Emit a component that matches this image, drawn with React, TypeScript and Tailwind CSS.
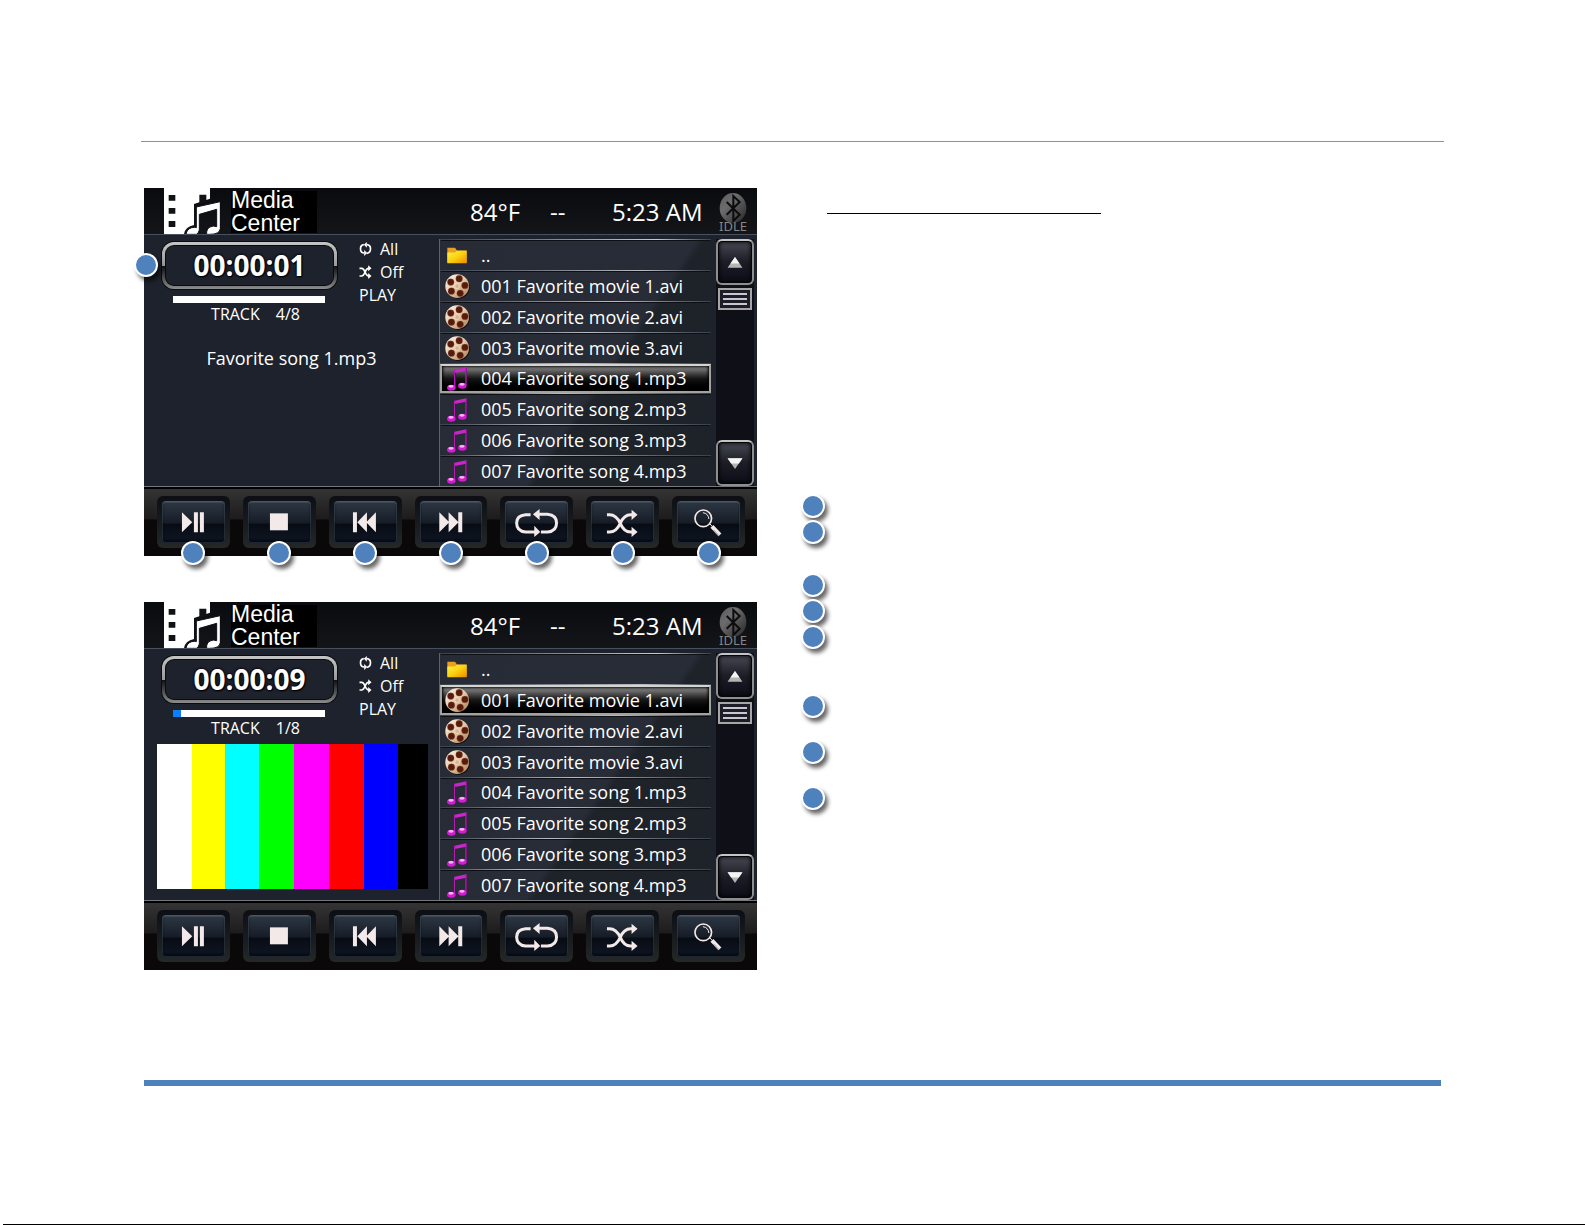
import React from "react";

type Track = { kind: "folder" | "movie" | "song"; name: string };

const tracks: Track[] = [
  { kind: "folder", name: ".." },
  { kind: "movie", name: "001 Favorite movie 1.avi" },
  { kind: "movie", name: "002 Favorite movie 2.avi" },
  { kind: "movie", name: "003 Favorite movie 3.avi" },
  { kind: "song", name: "004 Favorite song 1.mp3" },
  { kind: "song", name: "005 Favorite song 2.mp3" },
  { kind: "song", name: "006 Favorite song 3.mp3" },
  { kind: "song", name: "007 Favorite song 4.mp3" },
];

const badgeClass =
  "block size-6 rounded-full border-2 border-white bg-[#4f81bd] shadow-[3px_4px_4px_rgba(0,0,0,0.6)]";

function Logo() {
  return (
    <svg viewBox="102 24 168 138" className="h-[46px] w-14" aria-hidden="true">
      <path fill="#fff" d="M102 24H240V56L192 72V135Q166 140 162 162H102Z" />
      <path fill="#111216" d="M116 45h20v17h-20zM116 84h20v17h-20zM116 123h20v18h-20zM208 44h21v22l-21 7z" />
      <path
        fill="#fff"
        stroke="#111216"
        strokeWidth="3"
        d="M199 81L271 65V146Q268 163 240 163H230Q228 148 240 141Q250 136 260 140V88L208 103V150Q206 158 200 163H168Q170 148 185 143Q194 141 199 143Z"
      />
    </svg>
  );
}

function Bluetooth() {
  return (
    <svg viewBox="866 36 84 94" className="h-8 w-7" aria-hidden="true">
      <defs>
        <linearGradient id="bt" x1="0" y1="0" x2="1" y2="1">
          <stop offset="0" stopColor="#5c5c5c" />
          <stop offset="0.35" stopColor="#6c6c6c" />
          <stop offset="1" stopColor="#262626" />
        </linearGradient>
      </defs>
      <ellipse cx="908" cy="83" rx="40" ry="45" fill="url(#bt)" />
      <path d="M889 65L928 103L909 122V47L928 65L889 103" fill="none" stroke="#0c0c0e" strokeWidth="6" />
    </svg>
  );
}

function FolderIcon() {
  return (
    <svg viewBox="0 0 60 50" className="ml-[6px] h-[17px] w-5" aria-hidden="true">
      <defs>
        <linearGradient id="fold" x1="0" y1="0" x2="1" y2="1">
          <stop offset="0" stopColor="#fff04a" />
          <stop offset="0.5" stopColor="#f8d210" />
          <stop offset="1" stopColor="#f08a00" />
        </linearGradient>
      </defs>
      <path d="M1 2H24L30 10H59V46H1Z" fill="#e8a020" />
      <path d="M1 16H24L30 11H59V48H1Z" fill="url(#fold)" />
    </svg>
  );
}

function MovieIcon() {
  return (
    <svg viewBox="0 0 72 74" className="ml-1 size-[25px]" aria-hidden="true">
      <defs>
        <linearGradient id="reel" x1="0" y1="0" x2="1" y2="1">
          <stop offset="0" stopColor="#fff6ea" />
          <stop offset="0.5" stopColor="#e6c8a8" />
          <stop offset="1" stopColor="#a8784e" />
        </linearGradient>
      </defs>
      <circle cx="38" cy="39" r="34" fill="#0b0c10" />
      <circle cx="35" cy="36" r="35" fill="url(#reel)" />
      <g fill="#571a0c" stroke="#9a6a48" strokeWidth="1">
        <circle cx="41" cy="14" r="10" />
        <circle cx="58" cy="34" r="10" />
        <circle cx="44" cy="57" r="10" />
        <circle cx="18" cy="51" r="10" />
        <circle cx="16" cy="24" r="10" />
      </g>
      <circle cx="35" cy="36" r="7" fill="#d9b393" stroke="#f6e3cf" strokeWidth="2" />
    </svg>
  );
}

function SongIcon() {
  return (
    <svg viewBox="0 0 60 72" className="ml-[6px] h-6 w-5" aria-hidden="true">
      <path d="M25 62V13L60 5V55" fill="none" stroke="#08080c" strokeWidth="4" />
      <path d="M23 8L58 1V11L23 18Z" fill="#c62ac6" />
      <path d="M23 8V61M57 2V54" fill="none" stroke="#b818b8" strokeWidth="4" />
      <ellipse cx="13" cy="62" rx="13" ry="9" fill="#d21cd2" />
      <ellipse cx="46" cy="56" rx="13" ry="9" fill="#d21cd2" />
      <ellipse cx="12" cy="58" rx="8" ry="4" fill="#f7b4f4" />
      <ellipse cx="45" cy="52" rx="8" ry="4" fill="#f7b4f4" />
    </svg>
  );
}

function SmallRepeat() {
  return (
    <svg viewBox="0 0 36 42" className="mb-[2px] h-[14px] w-[13px]" fill="none" stroke="#fff" strokeWidth="5" aria-hidden="true">
      <path d="M13 8Q3 9 3 20Q3 32 14 33M22 34Q33 32 33 20Q33 9 22 8" />
      <path d="M22 0L13 8L22 17ZM14 24L23 33L14 42Z" fill="#fff" stroke="none" />
    </svg>
  );
}

function SmallShuffle() {
  return (
    <svg viewBox="0 0 36 42" className="mb-[2px] h-[14px] w-[13px]" fill="none" stroke="#fff" strokeWidth="5" aria-hidden="true">
      <path d="M0 10H7C17 10 16 33 27 33H30M0 33H7C17 33 16 10 27 10H30" />
      <path d="M26 1L36 10L26 19ZM26 24L36 33L26 42Z" fill="#fff" stroke="none" />
    </svg>
  );
}

const controls: { label: string; icon: React.ReactNode }[] = [
  { label: "Play or pause", icon: <path d="M60 34L91 64L60 94ZM96 34H108V94H96ZM114 34H126V94H114Z" /> },
  { label: "Stop", icon: <path d="M66 37H120V88H66Z" /> },
  { label: "Previous", icon: <path d="M57 34H69V94H57ZM99 34V94L70 64ZM126 34V94L97 64Z" /> },
  { label: "Next", icon: <path d="M58 34L88 64L58 94ZM86 34L116 64L86 94ZM115 34H127V94H115Z" /> },
  {
    label: "Repeat",
    icon: (
      <>
        <path
          fill="none"
          stroke="#f3e9e9"
          strokeWidth="9"
          d="M77 41H62Q35 43 35 66Q35 91 62 93H92M100 40H128Q155 43 155 66Q155 91 128 93H108"
        />
        <path d="M84 40L104 24V57ZM88 74L106 93L88 108Z" />
      </>
    ),
  },
  {
    label: "Shuffle",
    icon: (
      <>
        <path
          fill="none"
          stroke="#f3e9e9"
          strokeWidth="9"
          d="M48 41H56Q76 41 88 67Q99 93 119 93H126M48 93H56Q76 93 88 67Q99 41 119 41H126"
        />
        <path d="M122 26L140 41L122 57ZM122 77L140 93L122 108Z" />
      </>
    ),
  },
  {
    label: "Search",
    icon: (
      <>
        <circle cx="79" cy="52" r="25" fill="none" stroke="#f3e9e9" strokeWidth="5" />
        <path fill="none" stroke="#f3e9e9" strokeWidth="3" d="M78 35Q94 37 96 54M98 68L108 78" />
        <path fill="none" stroke="#f3e9e9" strokeWidth="12" d="M105 76L129 102" />
        <path fill="none" stroke="#56606c" strokeWidth="2" d="M110 87L126 104" />
      </>
    ),
  },
];

const highlights = [
  "from-[#39414c] via-[#c8cccf] via-80%",
  "from-[#39414c] via-[#b9bdc2] via-75%",
  "from-[#39414c] via-[#b9bdc2] via-65%",
  "from-[#39414c] via-[#b9bdc2] via-55%",
  "from-[#39414c] via-[#b9bdc2] via-50%",
  "from-[#39414c] via-[#b9bdc2] via-45%",
  "from-[#39414c] via-[#b9bdc2] via-40%",
  "from-[#39414c] via-[#b9bdc2] via-30%",
];

function ScrollButton({ up }: { up?: boolean }) {
  return (
    <button
      type="button"
      aria-label={up ? "Scroll up" : "Scroll down"}
      className="flex h-[46px] w-full items-center justify-center rounded-md border-2 border-[#8e8e8e] border-t-[#c4c4c4] bg-linear-to-b from-[#484a55] from-0% via-[#1c1d26] via-50% to-[#0c0c18] shadow-[inset_0_0_0_1px_#050508,inset_0_0_4px_1px_#000]"
    >
      <svg viewBox="0 0 48 34" className="h-[11px] w-4" aria-hidden="true">
        <path d={up ? "M24 0L47 33H1Z" : "M1 1H47L24 34Z"} fill="#b4b4b4" />
        <path d={up ? "M24 0L38 20H10Z" : "M1 1H47L36 17H12Z"} fill="#f4f4f4" />
      </svg>
    </button>
  );
}

function Player({
  time,
  position,
  progress,
  selected,
  title,
  callouts,
}: {
  time: string;
  position: string;
  progress: number;
  selected: number;
  title?: string;
  callouts?: boolean;
}) {
  return (
    <section className="flex flex-col bg-[#1e222c] font-['Open_Sans','Noto_Sans',sans-serif] text-white">
      <header className="flex h-[47px] items-start border-b border-[#46505e] bg-linear-to-b from-[#0a0b0f] to-[#141519] pr-[9px] pl-5">
        <Logo />
        <div className="mt-[3px] ml-[11px] h-[42px] w-[86px] bg-black">
          <h2 className="-mt-[2px] font-['Liberation_Sans',sans-serif] text-[23px] leading-[23px]">
            Media
            <br />
            Center
          </h2>
        </div>
        <div className="ml-auto flex pt-2 text-2xl leading-8">
          <span className="w-20">84°F</span>
          <span className="w-[62px]">--</span>
          <span className="w-[98px] whitespace-nowrap">5:23 AM</span>
        </div>
        <div className="ml-2 flex w-[30px] flex-col items-center pt-1">
          <Bluetooth />
          <span className="-mt-[6px] font-['Noto_Sans',sans-serif] text-[13px] leading-4 text-[#858585]">IDLE</span>
        </div>
      </header>

      <div className="flex h-[252px] border-b border-[#74787e]">
        <div className="flex-1">
          <div className="flex">
            <div className="mt-[7px] ml-[18px] w-[175px]">
              <div className="rounded-xl bg-linear-[180deg,#c4c4c4_0%,#9a9a9a_50%,#101010_51%,#8c8c8c_100%] p-1 shadow-[0_0_0_1px_#0a0b0e]">
                <div className="h-[39px] rounded-lg bg-[#1e222c] text-center text-[28px] leading-[39px] font-bold [text-shadow:0_0_2px_#000,0_0_3px_#000,1px_1px_1px_#000] shadow-[0_0_0_1px_#0a0b0e]">
                  {time}
                </div>
              </div>
              <div
                role="progressbar"
                aria-label="Track progress"
                aria-valuenow={progress}
                className="mt-[7px] mr-3 ml-[11px] h-[7px] bg-white"
              >
                <div className="h-full bg-[#0a80ff]" style={{ width: `${progress}%` }} />
              </div>
              <div className="flex justify-center gap-4 pl-3 text-base leading-[22px]">
                <span>TRACK</span>
                <span>{position}</span>
              </div>
            </div>
            <div className="ml-[22px] pt-[3px] text-base leading-[23px]">
              <div className="flex items-center gap-2">
                <SmallRepeat />
                All
              </div>
              <div className="flex items-center gap-2">
                <SmallShuffle />
                Off
              </div>
              <div>PLAY</div>
            </div>
          </div>
          {title ? (
            <p className="mt-[21px] text-center text-lg leading-6">{title}</p>
          ) : (
            <div className="mt-[5px] mr-[11px] ml-[13px] grid h-[145px] grid-cols-[35fr_33fr_34fr_35fr_35fr_35fr_34fr_30fr]">
              <span className="bg-white" />
              <span className="bg-[#ffff00]" />
              <span className="bg-[#00ffff]" />
              <span className="bg-[#00ff00]" />
              <span className="bg-[#ff00ff]" />
              <span className="bg-[#ff0000]" />
              <span className="bg-[#0000ff]" />
              <span className="bg-black" />
            </div>
          )}
        </div>

        <ul className="mt-1 grid w-[272px] grid-rows-8 border-l border-[#5c6370] bg-linear-[125deg,#262b36_0%,#272c37_58%,#1e2229_60%,#1e222a_100%]">
          {tracks.map((track, i) => (
            <li key={track.name} className="flex min-h-0 flex-col">
              <span className={`h-px to-[#39414c] bg-linear-to-r ${highlights[i]}`} />
              <button
                type="button"
                aria-pressed={i === selected}
                className={
                  i === selected
                    ? "flex min-h-0 flex-1 items-center border-2 border-[#a2a29e] border-t-[#d4d4d0] bg-linear-to-b from-[#969696] via-[#161616] via-50% to-black text-left shadow-[inset_0_0_3px_1px_#000]"
                    : "flex min-h-0 flex-1 items-center border-x-2 border-t border-b border-transparent border-t-[#0d0f14] text-left"
                }
              >
                <span className="-ml-px flex w-10 shrink-0 pt-[2px]">
                  {track.kind === "folder" ? <FolderIcon /> : track.kind === "movie" ? <MovieIcon /> : <SongIcon />}
                </span>
                <span className="text-lg leading-6 whitespace-pre">{track.name}</span>
              </button>
            </li>
          ))}
        </ul>

        <div className="mt-1 mr-[3px] ml-[5px] flex w-[38px] flex-col bg-[#0f0f17]">
          <ScrollButton up />
          <div className="mx-[2px] mt-[3px] flex h-[22px] flex-col justify-center gap-[3px] border-2 border-[#a6a6a6] bg-[#1c1d26] px-[3px]">
            <span className="h-[2px] bg-[#c9c5d2]" />
            <span className="h-[2px] bg-[#c9c5d2]" />
            <span className="h-[2px] bg-[#c9c5d2]" />
          </div>
          <div className="mt-auto">
            <ScrollButton />
          </div>
        </div>
      </div>

      <div className="grid h-[69px] grid-cols-7 gap-[13px] border-t-2 border-black bg-linear-[180deg,#353434_0%,#1d1b1c_45%,#0a0809_46%,#0a0809_100%] pt-[7px] pr-3 pl-[13px]">
        {controls.map((control) => (
          <div key={control.label} className="relative h-[52px]">
            <button
              type="button"
              aria-label={control.label}
              className="h-full w-full rounded-md bg-linear-to-b from-[#0c0e14] to-[#242828] p-[5px]"
            >
              <span className="flex h-full items-center justify-center rounded-sm border-t border-[#4a5662] bg-linear-[180deg,#2c3743_0%,#161c26_52%,#070b14_53%,#101824_100%] shadow-[inset_0_0_0_1px_rgba(100,115,130,0.3),inset_0_-3px_3px_#050812]">
                <svg viewBox="0 0 189 126" className="mb-[2px] h-[42px] w-[63px]" fill="#f3e9e9" aria-hidden="true">
                  {control.icon}
                </svg>
              </span>
            </button>
            {callouts && <span className={`absolute -bottom-[17px] left-1/2 -translate-x-1/2 ${badgeClass}`} />}
          </div>
        ))}
      </div>
    </section>
  );
}

export default function App() {
  return (
    <div className="flex min-h-screen flex-col bg-white">
      <div className="mx-[141px] mt-[141px] h-px bg-[#6f98c9]" />
      <main className="mx-36 mt-[46px] grid grid-cols-[613fr_684fr]">
        <div className="flex flex-col gap-[46px]">
          <div className="relative">
            <Player time="00:00:01" position="4/8" progress={0} selected={4} title="Favorite song 1.mp3" callouts />
            <span className={`absolute top-[65px] -left-[10px] ${badgeClass}`} />
          </div>
          <Player time="00:00:09" position="1/8" progress={5} selected={1} />
        </div>
        <div className="pl-11">
          <div className="mt-[25px] ml-[26px] h-px w-[274px] bg-black" />
          <div className="mt-[280px] flex flex-col">
            <span className={`mb-[2px] ${badgeClass}`} />
            <span className={`mb-[29px] ${badgeClass}`} />
            <span className={`mb-[2px] ${badgeClass}`} />
            <span className={`mb-[2px] ${badgeClass}`} />
            <span className={`mb-[45px] ${badgeClass}`} />
            <span className={`mb-[22px] ${badgeClass}`} />
            <span className={`mb-[22px] ${badgeClass}`} />
            <span className={badgeClass} />
          </div>
        </div>
      </main>
      <div className="mx-36 mt-[110px] h-[6px] bg-[#4f81bd]" />
      <div className="mt-auto ml-[3px] h-px bg-black" />
    </div>
  );
}
